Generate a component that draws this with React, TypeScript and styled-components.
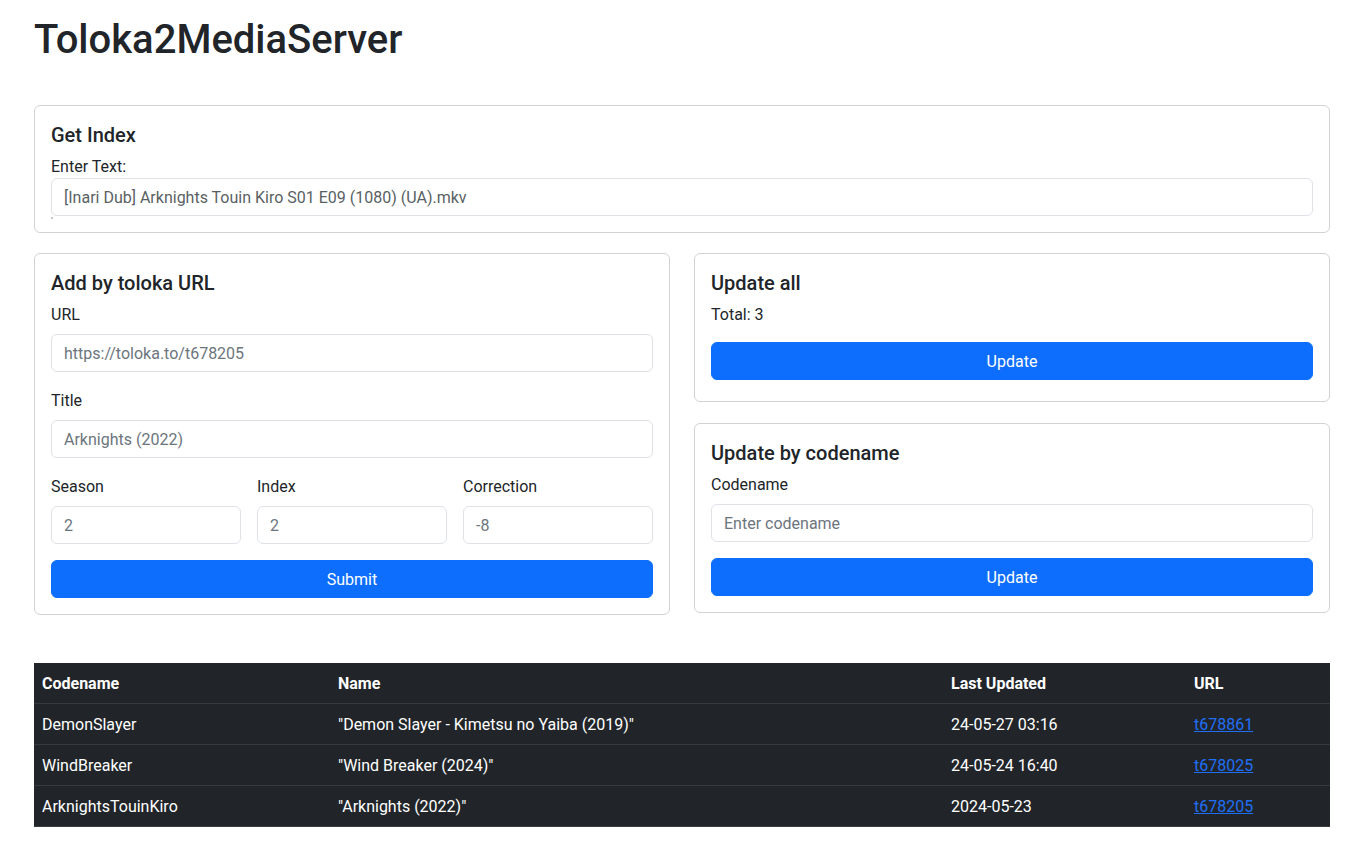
import * as React from "react";
import styled, { createGlobalStyle } from "styled-components";

const GlobalStyle = createGlobalStyle`
  *, *::before, *::after { box-sizing: border-box; }
  body {
    margin: 0;
    font-family: Roboto, "Liberation Sans", sans-serif;
    font-size: 16px;
    line-height: 1.5;
    color: #212529;
    background: #fff;
  }
`;

const SPage = styled.div`
  padding: 16px 34px 40px;
`;

const STitle = styled.h1`
  margin: 0 0 41px;
  font-size: 40px;
  font-weight: 500;
  line-height: 1.2;
`;

const SCard = styled.div<{ $mb?: number }>`
  border: 1px solid rgba(0, 0, 0, 0.175);
  border-radius: 6px;
  padding: 16px;
  margin-bottom: ${(p) => p.$mb ?? 0}px;
`;

const SCardTitle = styled.h5`
  margin: 0 0 8px;
  padding-top: 2px;
  font-size: 20px;
  font-weight: 500;
  line-height: 1.2;
  height: 24px;
  display: flex;
  align-items: center;
`;

const SLabel = styled.label<{ $mb?: number }>`
  display: block;
  margin-bottom: ${(p) => p.$mb ?? 8}px;
  padding-top: 1px;
  height: 24px;
  line-height: 24px;
`;

const SText = styled.p`
  margin: 0 0 16px;
  padding-top: 1px;
  height: 24px;
`;

const SInput = styled.input<{ $filled?: boolean }>`
  display: block;
  width: 100%;
  height: 38px;
  padding: 6px 12px;
  font: inherit;
  color: ${(p) => (p.$filled ? "#5a5f64" : "#212529")};
  border: 1px solid #dee2e6;
  border-radius: 6px;
  background: #fff;
  outline: none;
  &::placeholder { color: #6c757d; }
`;

const SField = styled.div<{ $mb?: number }>`
  margin-bottom: ${(p) => p.$mb ?? 16}px;
`;

const SDot = styled.div`
  height: 0;
  position: relative;
  &::after {
    content: "";
    position: absolute;
    left: 0;
    top: 1px;
    width: 2px;
    height: 2px;
    background: #c8c8c8;
  }
`;

const SGrid = styled.div`
  display: grid;
  grid-template-columns: 1fr 1fr;
  column-gap: 24px;
  margin-top: 20px;
  align-items: start;
`;

const SCol = styled.div`
  display: flex;
  flex-direction: column;
`;

const SThree = styled.div`
  display: grid;
  grid-template-columns: repeat(3, 1fr);
  column-gap: 16px;
  margin-bottom: 16px;
`;

const SButton = styled.button<{ $mb?: number }>`
  display: block;
  width: 100%;
  height: 38px;
  padding-top: 2px;
  border: 1px solid #0d6efd;
  border-radius: 6px;
  background: #0d6efd;
  color: #fff;
  font: inherit;
  cursor: pointer;
  margin-bottom: ${(p) => p.$mb ?? 0}px;
`;

const STable = styled.table`
  width: 100%;
  margin-top: 48px;
  border-collapse: collapse;
  background: #212529;
  color: #fff;
  table-layout: fixed;
`;

const STh = styled.th<{ $w: number }>`
  width: ${(p) => p.$w}px;
  text-align: left;
  font-weight: 700;
  padding: 9px 8px 7px;
  line-height: 24px;
  border-bottom: 1px solid #373b3e;
`;

const STd = styled.td`
  padding: 9px 8px 7px;
  line-height: 24px;
  border-bottom: 1px solid #373b3e;
`;

const SLink = styled.a`
  color: #1f6ff5;
  text-decoration: underline;
`;

const rows = [
  { code: "DemonSlayer", name: '"Demon Slayer - Kimetsu no Yaiba (2019)"', date: "24-05-27 03:16", url: "t678861" },
  { code: "WindBreaker", name: '"Wind Breaker (2024)"', date: "24-05-24 16:40", url: "t678025" },
  { code: "ArknightsTouinKiro", name: '"Arknights (2022)"', date: "2024-05-23", url: "t678205" },
];

export default function App() {
  return (
    <SPage>
      <GlobalStyle />
      <STitle>Toloka2MediaServer</STitle>

      <SCard>
        <SCardTitle>Get Index</SCardTitle>
        <SLabel $mb={0}>Enter Text:</SLabel>
        <SInput $filled defaultValue="[Inari Dub] Arknights Touin Kiro S01 E09 (1080) (UA).mkv" />
        <SDot />
      </SCard>

      <SGrid>
        <SCard>
          <SCardTitle>Add by toloka URL</SCardTitle>
          <SField>
            <SLabel>URL</SLabel>
            <SInput placeholder="https://toloka.to/t678205" />
          </SField>
          <SField>
            <SLabel>Title</SLabel>
            <SInput placeholder="Arknights (2022)" />
          </SField>
          <SThree>
            <div>
              <SLabel>Season</SLabel>
              <SInput placeholder="2" />
            </div>
            <div>
              <SLabel>Index</SLabel>
              <SInput placeholder="2" />
            </div>
            <div>
              <SLabel>Correction</SLabel>
              <SInput placeholder="-8" />
            </div>
          </SThree>
          <SButton>Submit</SButton>
        </SCard>

        <SCol>
          <SCard $mb={21}>
            <SCardTitle>Update all</SCardTitle>
            <SText>Total: 3</SText>
            <SButton $mb={5}>Update</SButton>
          </SCard>
          <SCard>
            <SCardTitle>Update by codename</SCardTitle>
            <SField>
              <SLabel>Codename</SLabel>
              <SInput placeholder="Enter codename" />
            </SField>
            <SButton>Update</SButton>
          </SCard>
        </SCol>
      </SGrid>

      <STable>
        <thead>
          <tr>
            <STh $w={296}>Codename</STh>
            <STh $w={613}>Name</STh>
            <STh $w={243}>Last Updated</STh>
            <STh $w={144}>URL</STh>
          </tr>
        </thead>
        <tbody>
          {rows.map((r) => (
            <tr key={r.code}>
              <STd>{r.code}</STd>
              <STd>{r.name}</STd>
              <STd>{r.date}</STd>
              <STd>
                <SLink href="#">{r.url}</SLink>
              </STd>
            </tr>
          ))}
        </tbody>
      </STable>
    </SPage>
  );
}
